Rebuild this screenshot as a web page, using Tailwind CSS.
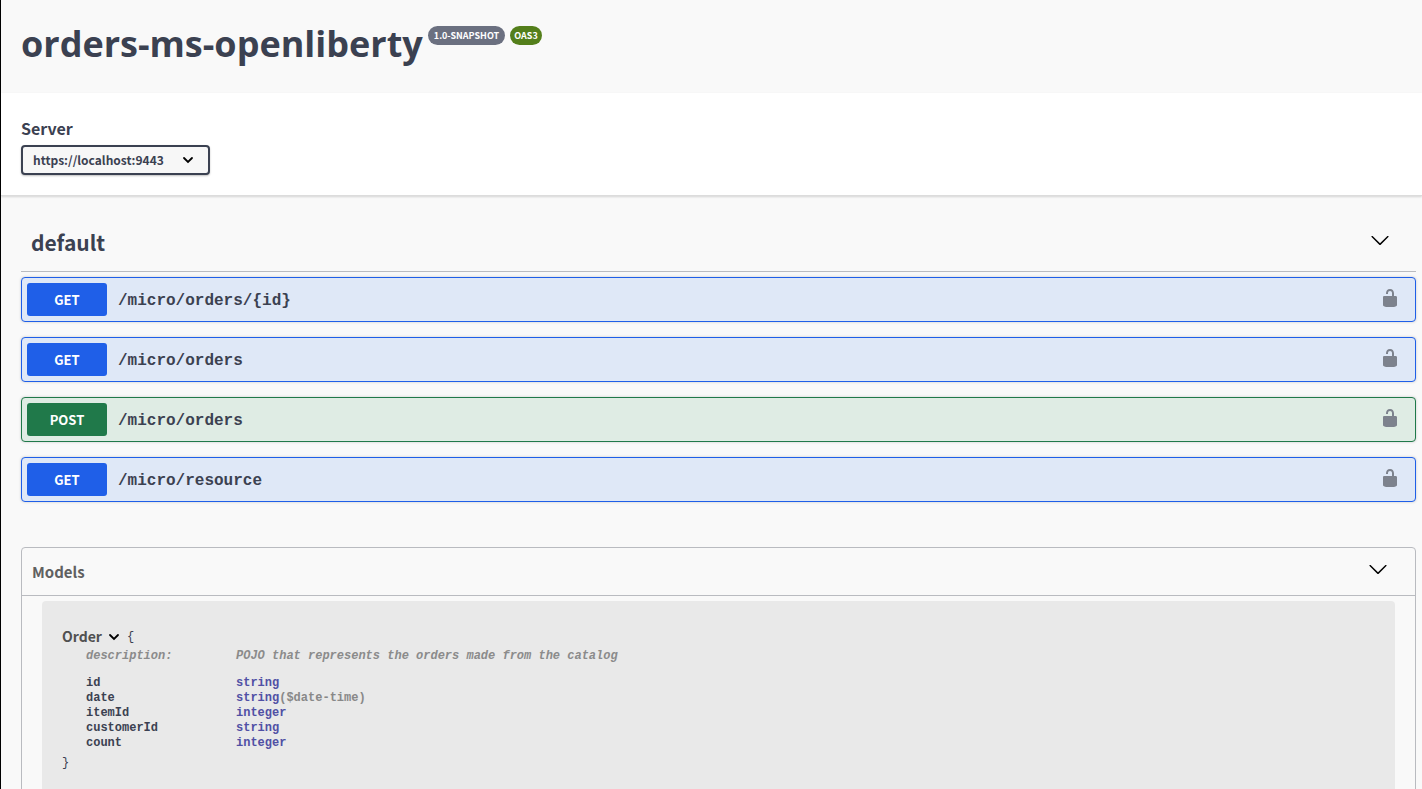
<!DOCTYPE html>
<html lang="en">
<head>
<meta charset="utf-8">
<meta name="viewport" content="width=device-width, initial-scale=1">
<title>orders-ms-openliberty</title>
<script src="https://cdn.jsdelivr.net/npm/@tailwindcss/browser@4"></script>
</head>
<body class="min-h-screen overflow-x-hidden border-l border-black bg-[#f9f9f9] font-['Noto_Sans_CJK_SC',sans-serif] text-[#3b4151]">
<svg class="hidden" aria-hidden="true">
  <symbol id="chevron" viewBox="0 0 20 20"><path d="M17.418 6.109c.272-.268.709-.268.979 0s.271.701 0 .969l-7.908 7.83c-.27.268-.707.268-.979 0l-7.908-7.83c-.27-.268-.27-.701 0-.969s.709-.268.979 0L10 13.25l7.418-7.141z"/></symbol>
  <symbol id="small-chevron" viewBox="0 0 12 12"><path d="M2 4l4 4 4-4" fill="none" stroke="currentColor" stroke-width="1.8" stroke-linecap="round"/></symbol>
  <symbol id="unlocked" viewBox="0 0 20 20"><path d="M15.8 8H14V5.6C14 2.703 12.665 1 10 1 7.334 1 6 2.703 6 5.6V6h2v-.801C8 3.754 8.797 3 10 3c1.203 0 2 .754 2 2.199V8H4c-.553 0-1 .646-1 1.199V17c0 .549.428 1.139.951 1.307l1.197.387C5.672 18.861 6.55 19 7.1 19h5.8c.549 0 1.428-.139 1.951-.307l1.196-.387c.524-.167.953-.757.953-1.306V9.199C17 8.646 16.352 8 15.8 8z"/></symbol>
</svg>

<header class="flex h-[93px] items-start pt-5 pl-5">
  <h1 class="font-['Open_Sans',sans-serif] text-[36px] leading-[48px] font-bold">orders-ms-openliberty</h1>
  <div class="mt-[6px] ml-[5px] flex gap-[5px] text-[9px] leading-[19px] font-bold text-white">
    <span class="rounded-full bg-[#6b7080] px-[6px]">1.0-SNAPSHOT</span>
    <span class="rounded-full bg-[#547f1b] px-1">OAS3</span>
  </div>
</header>

<section class="flex h-[103px] flex-col items-start border-b border-[#dcdcdc] bg-white pt-[25px] pl-5 shadow-[0_1px_2px_rgba(0,0,0,0.15)]">
  <label for="server" class="text-[16px] leading-[20px] font-bold">Server</label>
  <div class="relative mt-[7px]">
    <select id="server" class="h-[30px] w-[189px] appearance-none rounded border-2 border-[#3b4151] bg-[#f7f7f7] pl-[10px] text-[12px] leading-[20px] font-bold shadow-[0_1px_2px_rgba(0,0,0,0.25)]">
      <option>https://localhost:9443</option>
    </select>
    <svg class="pointer-events-none absolute top-[9px] right-4 size-3 text-black"><use href="#small-chevron"/></svg>
  </div>
</section>

<main class="pr-[6px] pl-5">
  <section>
    <h2 class="border-b border-[#b9bbc0] pt-[20px]">
      <button class="flex h-[55px] w-full items-center justify-between pr-[26px] pb-1 pl-[10px] text-[21px] leading-[32px] font-bold"><span>default</span><svg class="mb-1 size-5 fill-black"><use href="#chevron"/></svg></button>
    </h2>
    <div class="mt-[5px] flex flex-col gap-[15px] font-bold">
      <div class="flex h-[45px] items-center rounded border border-[#1f5fe8] bg-[#dfe8f7] pl-[5px] shadow-[0_0_3px_rgba(0,0,0,0.19)]">
        <button class="h-[33px] w-20 rounded-[3px] bg-[#1f5fe8] text-center text-[13px] leading-[20px] text-white">GET</button>
        <a href="#get-order" class="ml-[11px] flex-1 pt-[3px] font-['Liberation_Mono',monospace] text-[16px] leading-[20px]">/micro/orders/{id}</a>
        <button class="mr-[15px] mb-1" aria-label="Authorize get order"><svg class="size-5 fill-[#7d828d]"><use href="#unlocked"/></svg></button>
      </div>
      <div class="flex h-[45px] items-center rounded border border-[#1f5fe8] bg-[#dfe8f7] pl-[5px] shadow-[0_0_3px_rgba(0,0,0,0.19)]">
        <button class="h-[33px] w-20 rounded-[3px] bg-[#1f5fe8] text-center text-[13px] leading-[20px] text-white">GET</button>
        <a href="#get-orders" class="ml-[11px] flex-1 pt-[3px] font-['Liberation_Mono',monospace] text-[16px] leading-[20px]">/micro/orders</a>
        <button class="mr-[15px] mb-1" aria-label="Authorize get orders"><svg class="size-5 fill-[#7d828d]"><use href="#unlocked"/></svg></button>
      </div>
      <div class="flex h-[45px] items-center rounded border border-[#20794a] bg-[#dfece4] pl-[5px] shadow-[0_0_3px_rgba(0,0,0,0.19)]">
        <button class="h-[33px] w-20 rounded-[3px] bg-[#20794a] text-center text-[13px] leading-[20px] text-white">POST</button>
        <a href="#post-orders" class="ml-[11px] flex-1 pt-[3px] font-['Liberation_Mono',monospace] text-[16px] leading-[20px]">/micro/orders</a>
        <button class="mr-[15px] mb-1" aria-label="Authorize post orders"><svg class="size-5 fill-[#7d828d]"><use href="#unlocked"/></svg></button>
      </div>
      <div class="flex h-[45px] items-center rounded border border-[#1f5fe8] bg-[#dfe8f7] pl-[5px] shadow-[0_0_3px_rgba(0,0,0,0.19)]">
        <button class="h-[33px] w-20 rounded-[3px] bg-[#1f5fe8] text-center text-[13px] leading-[20px] text-white">GET</button>
        <a href="#get-resource" class="ml-[11px] flex-1 pt-[3px] font-['Liberation_Mono',monospace] text-[16px] leading-[20px]">/micro/resource</a>
        <button class="mr-[15px] mb-1" aria-label="Authorize get resource"><svg class="size-5 fill-[#7d828d]"><use href="#unlocked"/></svg></button>
      </div>
    </div>
  </section>

  <section class="mt-[45px] rounded border border-[#b9bbc0]">
    <h2 class="border-b border-[#b9bbc0]">
      <button class="flex h-[47px] w-full items-center justify-between pr-[27px] pl-[10px] text-[15px] leading-[20px] font-bold text-[#606060]"><span>Models</span><svg class="mb-[5px] size-5 fill-black"><use href="#chevron"/></svg></button>
    </h2>
    <div class="mx-5 mt-[5px] min-h-[193px] rounded bg-[#e9e9e9] px-5 pt-[25px] font-['Liberation_Mono',monospace] text-[12px] leading-[15px] font-bold text-[#3b4151]">
      <div class="flex h-5 items-center">
        <button class="flex items-center gap-[6px] font-['Noto_Sans_CJK_SC',sans-serif] text-[14px] leading-[20px] font-bold text-[#505050]">Order <svg class="mt-[2px] size-3 text-black"><use href="#small-chevron"/></svg></button>
        <span class="ml-[7px] pt-[2px] font-normal">{</span>
      </div>
      <table class="mt-[2px] ml-6">
        <tbody>
        <tr class="text-[#8b8b8b] italic"><th scope="row" class="w-[150px] pt-px pb-3 text-left">description:</th><td class="pt-px pb-3">POJO that represents the orders made from the catalog</td></tr>
        <tr><th scope="row" class="text-left">id</th><td class="text-[#5050a5]">string</td></tr>
        <tr><th scope="row" class="text-left">date</th><td class="text-[#5050a5]">string<span class="text-[#888888]">($date-time)</span></td></tr>
        <tr><th scope="row" class="text-left">itemId</th><td class="text-[#5050a5]">integer</td></tr>
        <tr><th scope="row" class="text-left">customerId</th><td class="text-[#5050a5]">string</td></tr>
        <tr><th scope="row" class="text-left">count</th><td class="text-[#5050a5]">integer</td></tr>
        </tbody>
      </table>
      <div class="mt-[5px] font-normal">}</div>
    </div>
  </section>
</main>
</body>
</html>
